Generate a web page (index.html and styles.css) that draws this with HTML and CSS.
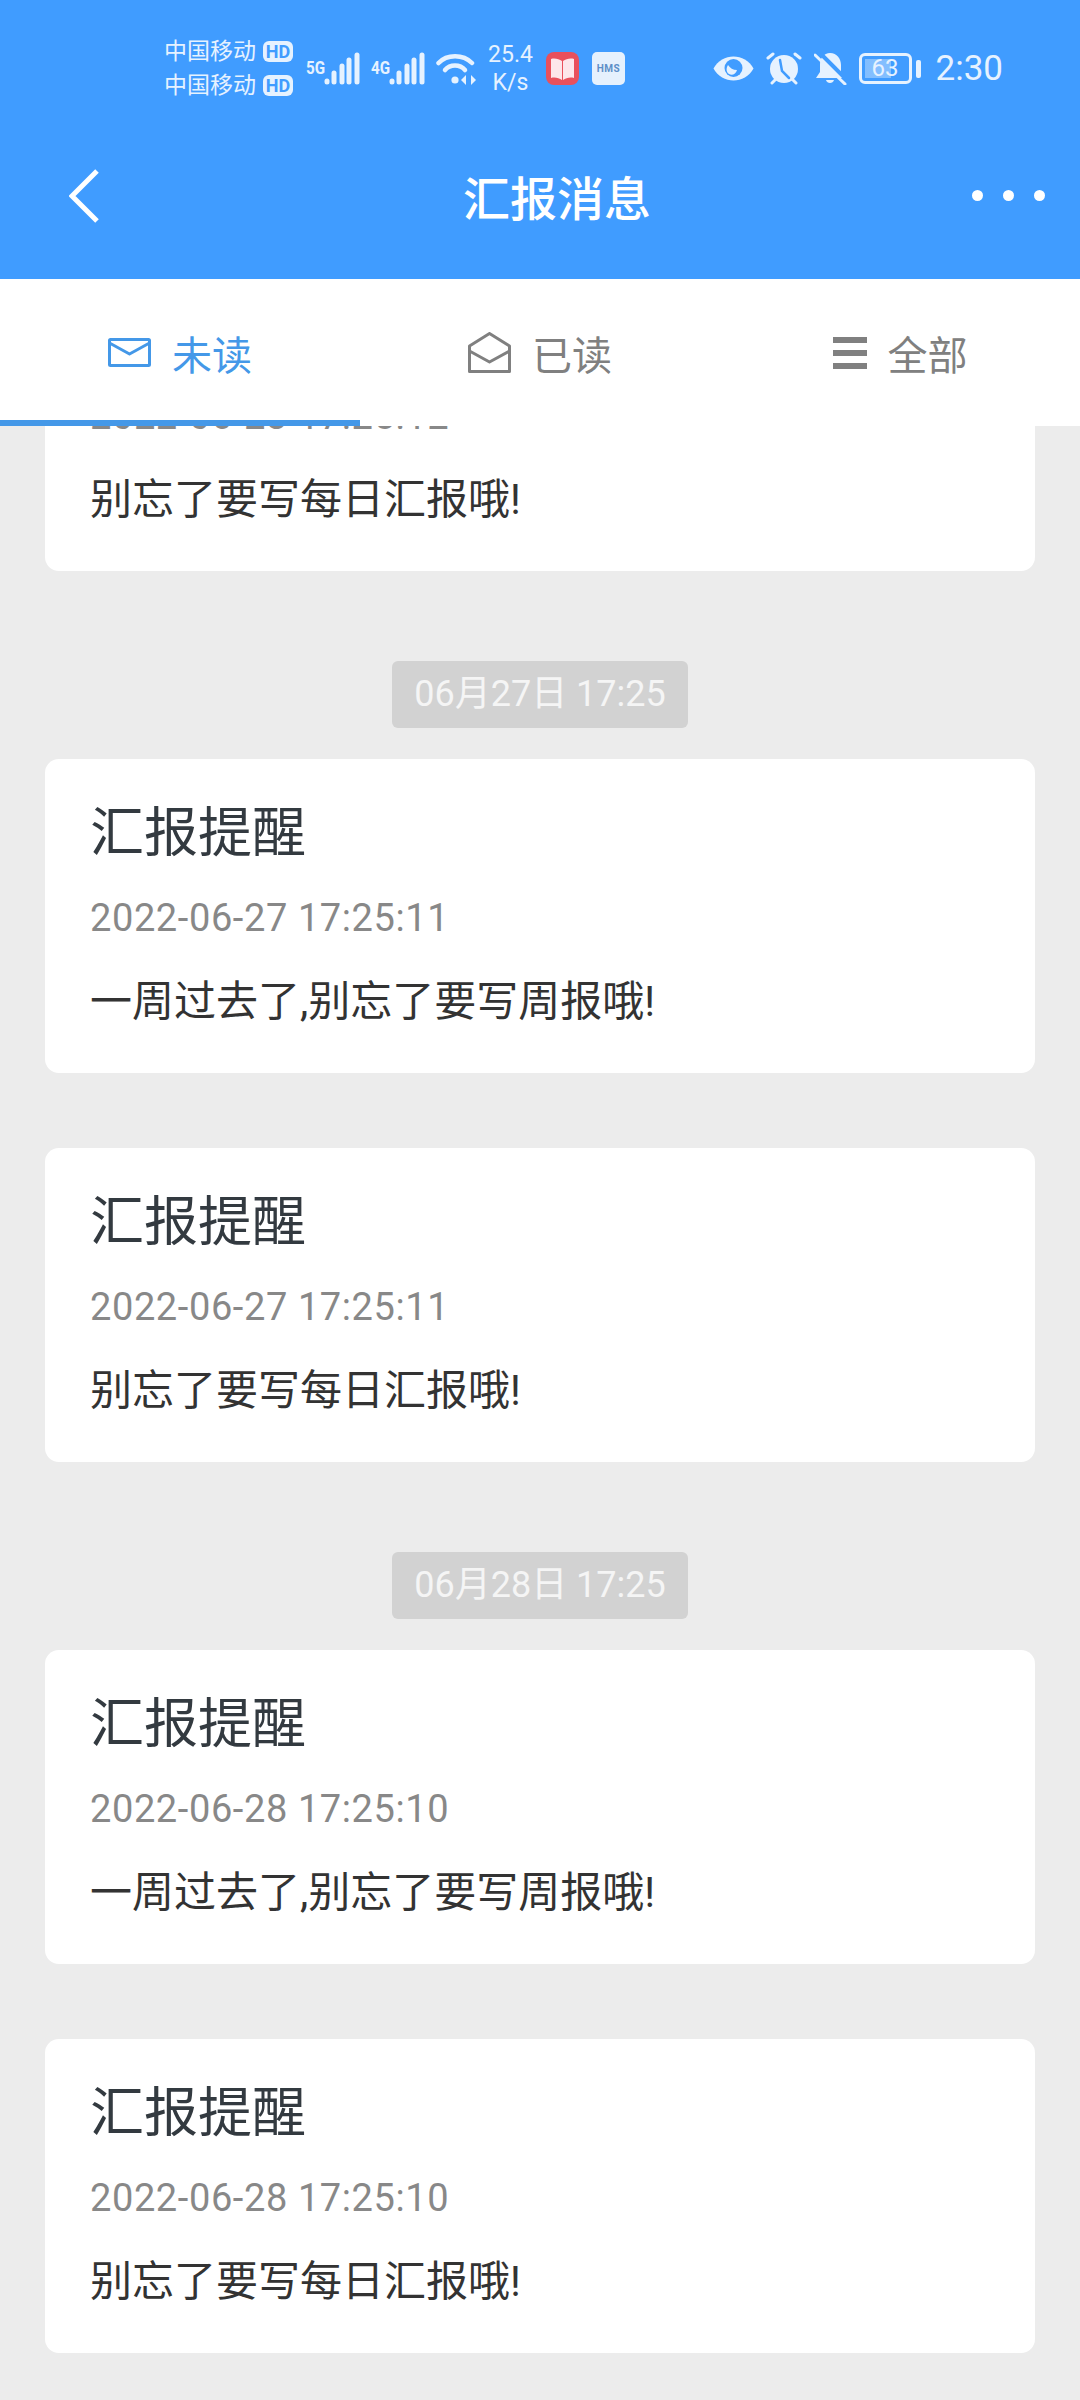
FILE: index.html
```html
<!DOCTYPE html>
<html lang="zh-CN">
<head>
    <meta charset="UTF-8">
    <meta name="viewport" content="width=device-width, initial-scale=1.0">
    <title>汇报消息</title>
    <link rel="stylesheet" href="styles.css">
</head>
<body>

<svg class="icon-defs" width="0" height="0">
    <symbol id="signal" viewBox="0 0 36 33">
        <g stroke="#e6f2ff" stroke-width="5" stroke-linecap="round">
            <line x1="3" y1="29" x2="3" y2="30"/>
            <line x1="10" y1="21" x2="10" y2="30"/>
            <line x1="18" y1="14" x2="18" y2="30"/>
            <line x1="25" y1="8" x2="25" y2="30"/>
            <line x1="33" y1="3" x2="33" y2="30"/>
        </g>
    </symbol>
</svg>

<header class="top-bar">
    <div class="status-bar">
        <div class="status-left">
            <div class="carriers">
                <div class="carrier">中国移动<span class="hd">HD</span></div>
                <div class="carrier">中国移动<span class="hd">HD</span></div>
            </div>
            <div class="network">
                <span class="network-type">5G</span>
                <svg class="signal" width="36" height="33"><use href="#signal"/></svg>
            </div>
            <div class="network">
                <span class="network-type">4G</span>
                <svg class="signal" width="36" height="33"><use href="#signal"/></svg>
            </div>
            <svg class="wifi" width="41" height="33" viewBox="0 0 41 33" fill="none" stroke="#e6f2ff" stroke-width="4.5" stroke-linecap="round">
                <path d="M2.5 11 C11 2 27 2 36 11"/>
                <path d="M9 18 C14 12 24 12 29 18"/>
                <circle cx="19" cy="28" r="3.6" fill="#e6f2ff" stroke="none"/>
                <path d="M30 23 L25 28 L30 33 Z" fill="#e6f2ff" stroke="none"/>
                <path d="M35 23 L40 28 L35 33 Z" fill="#e6f2ff" stroke="none"/>
            </svg>
            <div class="speed">
                <span>25.4</span>
                <span>K/s</span>
            </div>
            <svg class="app-icon" width="33" height="33" viewBox="0 0 33 33">
                <rect width="33" height="33" rx="8" fill="#e9505c"/>
                <path d="M5 7 C9 6 13 7 16 9 V28 C13 26 9 25 5 26 Z" fill="#fde6ea"/>
                <path d="M28 7 C24 6 20 7 17 9 V28 C20 26 24 25 28 26 Z" fill="#fde6ea"/>
            </svg>
            <div class="hms">HMS</div>
        </div>
        <div class="status-right">
            <svg width="41" height="25" viewBox="0 0 41 25">
                <path d="M0.5 12.5 C9 -3.5 32 -3.5 40.5 12.5 C32 28.5 9 28.5 0.5 12.5 Z" fill="#e6f2ff"/>
                <circle cx="20.5" cy="12" r="9" fill="#409cff"/>
                <path d="M15 9 C17 12 20 14 24 14 C23 18 19 20 16 18 C13 16 13 12 15 9 Z" fill="#e6f2ff"/>
            </svg>
            <svg width="36" height="33" viewBox="0 0 36 33" fill="none" stroke="#e6f2ff" stroke-width="3" stroke-linecap="round">
                <circle cx="18" cy="17" r="14" fill="#e6f2ff" stroke="none"/>
                <path d="M14 8 L16 19 L23 26" stroke="#409cff" stroke-width="2.5"/>
                <path d="M2 6 L7 2"/>
                <path d="M34 6 L29 2"/>
                <path d="M6 31 L9 28"/>
                <path d="M30 31 L27 28"/>
            </svg>
            <svg width="33" height="33" viewBox="0 0 33 33">
                <path d="M16 1 C23 1 27 7 27 13 V20 L31 26 H2 L6 20 V12 C6 6 10 1 16 1 Z" fill="#e6f2ff"/>
                <path d="M12 28 H20 C19 32 13 32 12 28 Z" fill="#e6f2ff"/>
                <line x1="4" y1="-1" x2="34" y2="29" stroke="#409cff" stroke-width="4"/>
                <line x1="1" y1="3" x2="31" y2="32" stroke="#e6f2ff" stroke-width="3" stroke-linecap="round"/>
            </svg>
            <div class="battery">
                <div class="battery-body"><span class="battery-level">63</span></div>
                <div class="battery-tip"></div>
            </div>
            <div class="clock">2:30</div>
        </div>
    </div>

    <nav class="nav-bar">
        <svg class="back" width="30" height="54" viewBox="0 0 30 54" fill="none" stroke="#fff" stroke-width="5">
            <path d="M28 2 L3 27 L28 52"/>
        </svg>
        <h1>汇报消息</h1>
        <div class="more">
            <span></span>
            <span></span>
            <span></span>
        </div>
    </nav>
</header>

<div class="tabs">
    <div class="tab active">
        <svg width="43" height="29" viewBox="0 0 43 29" fill="none" stroke="#4498e8" stroke-width="3" stroke-linejoin="round">
            <rect x="1.5" y="1.5" width="40" height="26" rx="1"/>
            <path d="M1.5 5 L21.5 16 L41.5 5"/>
        </svg>
        <span>未读</span>
    </div>
    <div class="tab">
        <svg width="43" height="41" viewBox="0 0 43 41" fill="none" stroke="#808080" stroke-width="3" stroke-linejoin="round">
            <path d="M1.5 14 L21.5 1.5 L41.5 14 V39.5 H1.5 Z"/>
            <path d="M1.5 19 L21.5 30 L41.5 19"/>
        </svg>
        <span>已读</span>
    </div>
    <div class="tab">
        <svg width="34" height="32" viewBox="0 0 34 32" fill="#808080">
            <rect width="34" height="6"/>
            <rect y="13" width="34" height="6"/>
            <rect y="26" width="34" height="6"/>
        </svg>
        <span>全部</span>
    </div>
</div>

<main class="messages">
    <article class="card">
        <h2>汇报提醒</h2>
        <p class="time">2022-06-23 17:25:12</p>
        <p class="text">别忘了要写每日汇报哦!</p>
    </article>

    <div class="day">06月27日 17:25</div>
    <article class="card">
        <h2>汇报提醒</h2>
        <p class="time">2022-06-27 17:25:11</p>
        <p class="text">一周过去了,别忘了要写周报哦!</p>
    </article>
    <article class="card">
        <h2>汇报提醒</h2>
        <p class="time">2022-06-27 17:25:11</p>
        <p class="text">别忘了要写每日汇报哦!</p>
    </article>

    <div class="day">06月28日 17:25</div>
    <article class="card">
        <h2>汇报提醒</h2>
        <p class="time">2022-06-28 17:25:10</p>
        <p class="text">一周过去了,别忘了要写周报哦!</p>
    </article>
    <article class="card">
        <h2>汇报提醒</h2>
        <p class="time">2022-06-28 17:25:10</p>
        <p class="text">别忘了要写每日汇报哦!</p>
    </article>
</main>

</body>
</html>
```

FILE: styles.css
```css
* {
    margin: 0;
    padding: 0;
    box-sizing: border-box;
}

body {
    font-family: Roboto, 'Noto Sans CJK SC', sans-serif;
    background-color: #ececec;
    display: flex;
    flex-direction: column;
    height: 2400px;
    overflow: hidden;
}

svg {
    display: block;
    flex-shrink: 0;
}

.icon-defs {
    position: absolute;
}

/* Status bar + title */
.top-bar {
    background-color: #409cff;
    height: 279px;
    color: #e6f2ff;
}

.status-bar {
    height: 112px;
    padding: 25px 77px 0 164px;
    display: flex;
    justify-content: space-between;
    align-items: center;
}

.status-left,
.status-right {
    display: flex;
    align-items: center;
}

.status-left {
    gap: 11px;
}

.status-right {
    gap: 12px;
}

.carriers {
    width: 131px;
    display: flex;
    flex-direction: column;
    gap: 5px;
}

.carrier {
    display: flex;
    align-items: center;
    gap: 7px;
    font-size: 23px;
    line-height: 29px;
    white-space: nowrap;
}

.hd {
    width: 30px;
    height: 21px;
    background-color: #e6f2ff;
    color: #409cff;
    border-radius: 6px;
    font-size: 18px;
    font-weight: 700;
    line-height: 21px;
    text-align: center;
}

.network {
    display: flex;
    height: 33px;
}

.network-type {
    width: 18px;
    margin-top: 6px;
    font-size: 19px;
    font-weight: 700;
    line-height: 19px;
    white-space: nowrap;
    transform: scaleX(0.8);
    transform-origin: left;
}

.speed {
    width: 45px;
    display: flex;
    flex-direction: column;
    align-items: center;
    font-size: 23px;
    line-height: 28px;
}

.app-icon {
    margin-left: 2px;
}

.hms {
    width: 33px;
    height: 33px;
    margin-left: 2px;
    background-color: #e6f1fd;
    border-radius: 5px;
    color: #5e8fc8;
    font-size: 10px;
    font-weight: 700;
    line-height: 33px;
    letter-spacing: 0.5px;
    text-align: center;
}

.battery {
    display: flex;
    align-items: center;
    gap: 4px;
}

.battery-body {
    width: 53px;
    height: 31px;
    padding: 3px;
    border: 3px solid #e6f2ff;
    border-radius: 6px;
}

.battery-level {
    display: block;
    height: 100%;
    background: linear-gradient(to right, rgba(230, 242, 255, 0.4) 63%, transparent 63%);
    font-size: 24px;
    line-height: 19px;
    text-align: center;
}

.battery-tip {
    width: 5px;
    height: 18px;
    background-color: #e6f2ff;
    border-radius: 2px;
}

.clock {
    margin-left: 3px;
    font-size: 35px;
    line-height: 40px;
}

.nav-bar {
    height: 167px;
    padding: 0 35px 0 69px;
    display: grid;
    grid-template-columns: 1fr auto 1fr;
    align-items: center;
}

.nav-bar h1 {
    color: white;
    font-size: 47px;
    font-weight: 500;
}

.more {
    justify-self: end;
    display: flex;
    gap: 20px;
}

.more span {
    width: 11px;
    height: 11px;
    background-color: white;
    border-radius: 50%;
}

/* Tabs */
.tabs {
    height: 147px;
    flex-shrink: 0;
    background-color: white;
    display: flex;
}

.tab {
    flex: 1;
    display: flex;
    justify-content: center;
    align-items: center;
    gap: 21px;
    padding-top: 6px;
    border-bottom: 6px solid transparent;
    color: #808080;
    font-size: 40px;
}

.tab.active {
    border-bottom-color: #4498e8;
    color: #4498e8;
}

/* Message list, scrolled to the bottom */
.messages {
    flex: 1;
    min-height: 0;
    overflow: hidden;
    padding: 0 45px 47px;
    display: flex;
    flex-direction: column;
    justify-content: flex-end;
    align-items: center;
}

.card {
    width: 100%;
    flex-shrink: 0;
    height: 314px;
    padding: 45px 45px 40px;
    background-color: white;
    border-radius: 14px;
}

.card + .card {
    margin-top: 75px;
}

.card h2 {
    color: #333a40;
    font-size: 54px;
    font-weight: 400;
    line-height: 60px;
}

.time {
    margin-top: 29px;
    color: #888;
    font-size: 38px;
    line-height: 50px;
    letter-spacing: 0.6px;
}

.text {
    margin-top: 29px;
    color: #333;
    font-size: 42px;
    line-height: 60px;
}

.day {
    flex-shrink: 0;
    margin: 90px 0 31px;
    width: 296px;
    height: 67px;
    background-color: #d2d2d2;
    border-radius: 6px;
    color: #f5f5f5;
    font-size: 36px;
    line-height: 67px;
    text-align: center;
}
```
